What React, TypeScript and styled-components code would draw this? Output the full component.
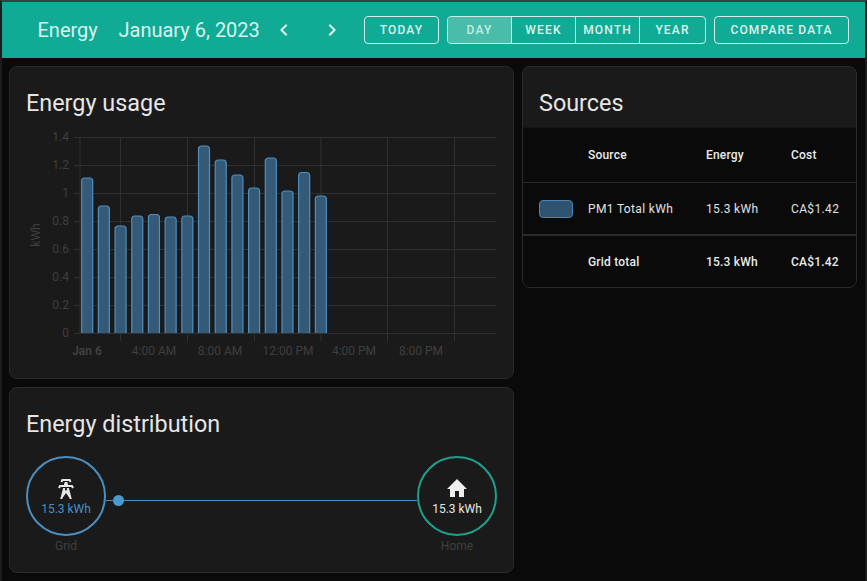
import styled, { createGlobalStyle } from 'styled-components';

const GlobalStyle = createGlobalStyle`
  html, body {
    margin: 0;
    padding: 0;
    background: #0a0a0a;
    overflow: hidden;
  }
  body {
    font-family: Roboto, "Liberation Sans", sans-serif;
  }
`;

const Frame = styled.div`
  width: 867px;
  height: 581px;
  box-sizing: border-box;
  border-top: 2px solid #3c3f41;
  border-left: 2px solid #1c1c1c;
  border-right: 2px solid #1c1c1c;
  background: #0a0a0a;
  overflow: hidden;
`;

const Toolbar = styled.header`
  height: 56px;
  display: flex;
  align-items: center;
  padding-left: 35.5px;
  background: #11ab95;
  color: #d9f3ee;
`;

const ToolbarTitle = styled.div`
  width: 81px;
  font-size: 20px;
  line-height: 24px;
`;

const DateLabel = styled.div`
  width: 141.5px;
  font-size: 20px;
  line-height: 24px;
  white-space: nowrap;
`;

const Arrow = styled.button`
  width: 48px;
  height: 28px;
  padding: 0;
  display: flex;
  align-items: center;
  justify-content: center;
  border: 0;
  background: transparent;
  color: inherit;
`;

const ArrowGroup = styled.div`
  display: flex;
  margin-right: 8px;
`;

const ActionButton = styled.button<{ $width: number }>`
  width: ${(p) => p.$width}px;
  height: 28px;
  margin-right: 8px;
  padding: 0;
  box-sizing: border-box;
  border: 1px solid #cfefe9;
  border-radius: 4px;
  background: transparent;
  color: #d9f3ee;
  font: 500 12px Roboto, sans-serif;
  letter-spacing: 1.15px;
`;

const Segments = styled.div`
  display: flex;
  width: 259px;
  height: 28px;
  box-sizing: border-box;
  margin-right: 8px;
  border: 1px solid #cfefe9;
  border-radius: 4px;
  overflow: hidden;
`;

const Segment = styled.button<{ $active?: boolean }>`
  flex: 0 0 64px;
  box-sizing: border-box;
  padding: 0;
  border: 0;
  border-left: 1px solid #cfefe9;
  background: ${(p) => (p.$active ? '#49bcaa' : 'transparent')};
  color: ${(p) => (p.$active ? '#c4ebe4' : '#d9f3ee')};
  font: 500 12px Roboto, sans-serif;
  letter-spacing: 1.15px;

  &:first-child {
    flex-basis: 63px;
    border-left: 0;
  }

  &:last-child {
    flex: 1;
  }
`;

const Board = styled.main`
  display: grid;
  grid-template-columns: 505px 335px;
  column-gap: 8px;
  padding: 8px 7px;
  align-items: start;
`;

const Column = styled.div`
  display: flex;
  flex-direction: column;
  gap: 8px;
`;

const Card = styled.section<{ $height: number }>`
  height: ${(p) => p.$height}px;
  box-sizing: border-box;
  border: 1px solid #2a2a2a;
  border-radius: 8px;
  background: #1a1a1a;
  overflow: hidden;
`;

const CardTitle = styled.h2`
  margin: 0;
  padding: 20px 16px 0;
  color: #e6e6e6;
  font-size: 23.4px;
  font-weight: 400;
  line-height: 32px;
`;

const ChartSvg = styled.svg`
  display: block;
`;

const AxisText = styled.text`
  fill: #3f3f3f;
  font-family: Roboto, sans-serif;
  font-size: 12px;
`;

const Flow = styled.div`
  display: flex;
  align-items: flex-start;
  padding: 16px 16px 0;
`;

const Node = styled.div`
  width: 80px;
  display: flex;
  flex-direction: column;
  align-items: center;
  flex: none;
`;

const Circle = styled.div<{ $color: string }>`
  width: 80px;
  height: 80px;
  box-sizing: border-box;
  border: 2px solid ${(p) => p.$color};
  border-radius: 50%;
  display: flex;
  flex-direction: column;
  align-items: center;
  padding-top: 19px;
`;

const NodeValue = styled.div<{ $color: string }>`
  color: ${(p) => p.$color};
  font-size: 12px;
  line-height: 14px;
  margin-top: 1px;
`;

const NodeLabel = styled.div`
  margin-top: 3px;
  color: #3f3f3f;
  font-size: 12px;
  line-height: 14px;
`;

const Link = styled.div`
  position: relative;
  flex: 1;
  height: 1px;
  margin-top: 44px;
  background: #4a8fc4;
`;

const Dot = styled.span`
  position: absolute;
  left: 7px;
  top: -5px;
  width: 11px;
  height: 11px;
  border-radius: 50%;
  background: #4a9ad0;
`;

const TableWrap = styled.div`
  margin-top: 8px;
  background: #0a0a0a;
  border-top: 1px solid #141414;
  height: 161px;
`;

const Row = styled.div<{ $height: number; $rule?: string }>`
  display: grid;
  grid-template-columns: 65px 118px 85px 1fr;
  align-items: center;
  box-sizing: border-box;
  height: ${(p) => p.$height}px;
  border-bottom: ${(p) => p.$rule ?? 'none'};
`;

const Cell = styled.div<{ $bold?: boolean }>`
  color: ${(p) => (p.$bold ? '#eaeaea' : '#e1e1e1')};
  font-size: 12px;
  font-weight: ${(p) => (p.$bold ? 500 : 400)};
  letter-spacing: ${(p) => (p.$bold ? '0.2px' : '0.35px')};
`;

const Swatch = styled.div`
  width: 34px;
  height: 18px;
  margin-left: 16px;
  box-sizing: border-box;
  border: 1px solid #4a86b5;
  border-radius: 4px;
  background: #2f526f;
`;

const TOPS = [178, 206, 226, 216, 214.5, 217, 216, 146, 160, 175, 188, 158, 191, 172.5, 196];
const Y_LABELS = ['1.4', '1.2', '1', '0.8', '0.6', '0.4', '0.2', '0'];
const X_GRID = [80, 120.5, 187.5, 254.5, 321, 387.5, 454.5];
const X_LABELS: [number, string, boolean][] = [
  [87, 'Jan 6', true],
  [154, '4:00 AM', false],
  [220, '8:00 AM', false],
  [288, '12:00 PM', false],
  [354, '4:00 PM', false],
  [421, '8:00 PM', false],
];

// svg coords are page coords minus the card's origin
const OX = 10;
const OY = 119;

const UsageChart = () => (
  <ChartSvg width="503" height="241" viewBox={`${OX} ${OY} 503 241`}>
    {Y_LABELS.map((label, i) => {
      const y = 137 + i * 28;
      return (
        <g key={label}>
          <line x1="74" x2="496" y1={y + 0.5} y2={y + 0.5} stroke="#303030" />
          <AxisText x="69" y={y + 4} textAnchor="end">
            {label}
          </AxisText>
        </g>
      );
    })}
    {X_GRID.map((x, i) => (
      <line key={x} x1={x} x2={x} y1="137" y2={i === 0 ? 333 : 341} stroke="#303030" />
    ))}
    {TOPS.map((top, i) => {
      const x = 81.7 + i * 16.69;
      return (
        <path
          key={i}
          d={`M${x} 333V${top + 3}a3 3 0 0 1 3-3h5a3 3 0 0 1 3 3V333`}
          fill="#355a78"
          stroke="#4d8fbf"
          strokeWidth="1.2"
        />
      );
    })}
    <AxisText x="40" y="235" textAnchor="middle" transform="rotate(-90 40 235)">
      kWh
    </AxisText>
    {X_LABELS.map(([x, label, bold]) => (
      <AxisText key={label} x={x} y="355" textAnchor="middle" fontWeight={bold ? 700 : 400}>
        {label}
      </AxisText>
    ))}
  </ChartSvg>
);

const ChevronLeft = () => (
  <svg width="24" height="24" viewBox="0 0 24 24" fill="currentColor">
    <path d="M15.41 16.58L10.83 12l4.58-4.59L14 6l-6 6 6 6z" />
  </svg>
);

const ChevronRight = () => (
  <svg width="24" height="24" viewBox="0 0 24 24" fill="currentColor">
    <path d="M8.59 16.58L13.17 12 8.59 7.41 10 6l6 6-6 6z" />
  </svg>
);

const TowerIcon = () => (
  <svg width="24" height="24" viewBox="0 0 24 24" fill="#e6e6e6">
    <path d="M8.28,5.45L6.5,4.55L7.76,2H16.23L17.5,4.55L15.72,5.44L15,4H9L8.28,5.45M18.62,8H14.09L13.3,5H10.7L9.91,8H5.38L4.1,10.55L5.89,11.44L6.62,10H17.38L18.1,11.45L19.89,10.56L18.62,8M17.77,22H15.7L15.46,21.1L12,15.9L8.53,21.1L8.3,22H6.23L9.12,11H11.19L10.83,12.35L12,14.1L13.16,12.35L12.81,11H14.88L17.77,22Z" />
  </svg>
);

const HomeIcon = () => (
  <svg width="24" height="24" viewBox="0 0 24 24" fill="#eeeeee">
    <path d="M10,20V14H14V20H19V12H22L12,2L2,12H5V20H10Z" />
  </svg>
);

const App = () => (
  <Frame>
    <GlobalStyle />
    <Toolbar>
      <ToolbarTitle>Energy</ToolbarTitle>
      <DateLabel>January 6, 2023</DateLabel>
      <ArrowGroup>
        <Arrow>
          <ChevronLeft />
        </Arrow>
        <Arrow>
          <ChevronRight />
        </Arrow>
      </ArrowGroup>
      <ActionButton $width={75}>TODAY</ActionButton>
      <Segments>
        <Segment $active>DAY</Segment>
        <Segment>WEEK</Segment>
        <Segment>MONTH</Segment>
        <Segment>YEAR</Segment>
      </Segments>
      <ActionButton $width={135}>COMPARE DATA</ActionButton>
    </Toolbar>
    <Board>
      <Column>
        <Card $height={313}>
          <CardTitle>Energy usage</CardTitle>
          <UsageChart />
        </Card>
        <Card $height={186}>
          <CardTitle>Energy distribution</CardTitle>
          <Flow>
            <Node>
              <Circle $color="#4a8fc4">
                <TowerIcon />
                <NodeValue $color="#4a8fc4">15.3 kWh</NodeValue>
              </Circle>
              <NodeLabel>Grid</NodeLabel>
            </Node>
            <Link>
              <Dot />
            </Link>
            <Node>
              <Circle $color="#1fa08c">
                <HomeIcon />
                <NodeValue $color="#e6e6e6">15.3 kWh</NodeValue>
              </Circle>
              <NodeLabel>Home</NodeLabel>
            </Node>
          </Flow>
        </Card>
      </Column>
      <Card $height={222}>
        <CardTitle>Sources</CardTitle>
        <TableWrap>
          <Row $height={55} $rule="1px solid #2a2a2a">
            <span />
            <Cell $bold>Source</Cell>
            <Cell $bold>Energy</Cell>
            <Cell $bold>Cost</Cell>
          </Row>
          <Row $height={53} $rule="2px solid #2a2a2a">
            <Swatch />
            <Cell>PM1 Total kWh</Cell>
            <Cell>15.3 kWh</Cell>
            <Cell>CA$1.42</Cell>
          </Row>
          <Row $height={52}>
            <span />
            <Cell $bold>Grid total</Cell>
            <Cell $bold>15.3 kWh</Cell>
            <Cell $bold>CA$1.42</Cell>
          </Row>
        </TableWrap>
      </Card>
    </Board>
  </Frame>
);

export default App;
